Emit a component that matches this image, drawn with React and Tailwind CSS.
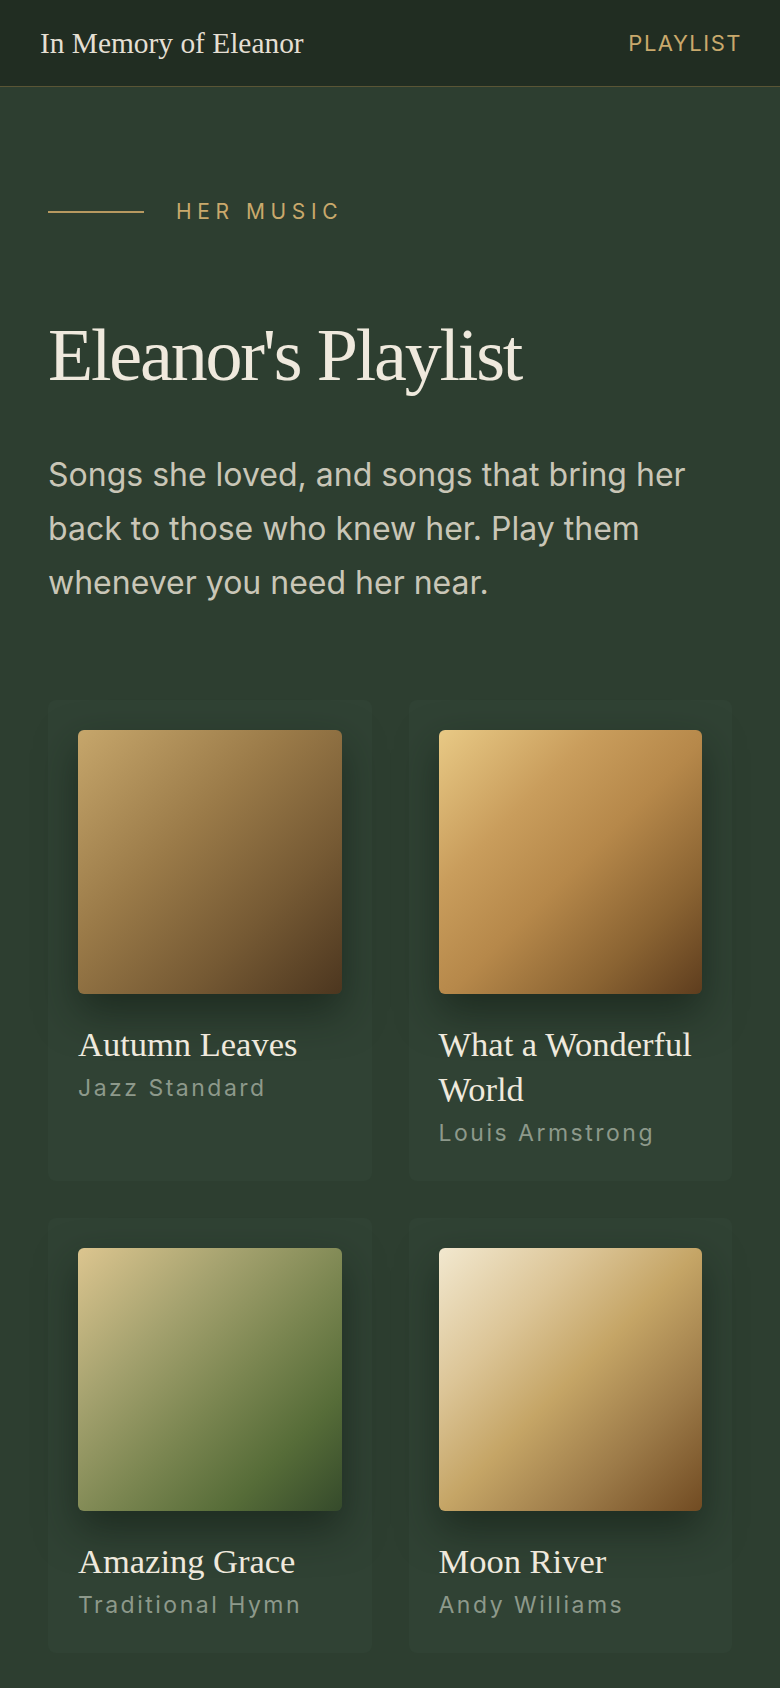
import React from "react";

const serif = { fontFamily: '"Liberation Serif", "Times New Roman", serif' };

const songs = [
  {
    title: "Autumn Leaves",
    artist: "Jazz Standard",
    cover: "bg-[linear-gradient(135deg,#c6a66b_0%,#9a7a48_40%,#765a34_70%,#4c361f_100%)]",
  },
  {
    title: "What a Wonderful World",
    artist: "Louis Armstrong",
    cover: "bg-[linear-gradient(135deg,#e8c985_0%,#c99d5c_30%,#b6884a_52%,#8a6332_78%,#5e3d1e_100%)]",
  },
  {
    title: "Amazing Grace",
    artist: "Traditional Hymn",
    cover: "bg-[linear-gradient(135deg,#dcc58f_0%,#a5a26f_30%,#7b8651_55%,#566c38_78%,#354a2b_100%)]",
  },
  {
    title: "Moon River",
    artist: "Andy Williams",
    cover: "bg-[linear-gradient(135deg,#f2e8cf_0%,#dcc597_28%,#c5a566_50%,#9c7a48_75%,#714b22_100%)]",
  },
];

function SongCard({ song }) {
  return (
    <div className="rounded-[8px] bg-[#304234] p-[30px] pb-[32px]">
      <div
        className={`aspect-square w-full rounded-[6px] shadow-[0_18px_40px_rgba(15,25,17,0.55)] ${song.cover}`}
      />
      <h3
        className="mt-[28px] text-[34.5px] leading-[45px] text-[#efe9dd]"
        style={serif}
      >
        {song.title}
      </h3>
      <p className="mt-[5px] text-[23px] leading-[32px] tracking-[2.5px] text-[#8d998b]">
        {song.artist}
      </p>
    </div>
  );
}

export default function App() {
  return (
    <div
      className="min-h-[1688px] bg-[#2d3e30]"
      style={{ fontFamily: 'Inter, "Noto Sans", sans-serif' }}
    >
      {/* Header */}
      <header className="flex h-[87px] items-center justify-between border-b border-[#5a5535] bg-[#212d22] pl-10 pr-[38px]">
        <span className="text-[29.4px] leading-[36px] text-[#e4dfd3]" style={serif}>
          In Memory of Eleanor
        </span>
        <span className="text-[22px] leading-[26px] tracking-[1.5px] text-[#c9a96c]">
          PLAYLIST
        </span>
      </header>

      <main className="px-12 pt-[113px] pb-10">
        {/* Eyebrow */}
        <div className="flex items-center gap-8">
          <div className="h-[2px] w-[96px] bg-[#b79960]" />
          <span className="text-[21px] leading-[24px] tracking-[5.6px] text-[#c9a96c]">
            HER MUSIC
          </span>
        </div>

        <h1
          className="mt-[91px] text-[74px] leading-[81px] tracking-[-2.2px] text-[#efe9dd]"
          style={serif}
        >
          Eleanor's Playlist
        </h1>

        <p className="mt-[52px] text-[32px] leading-[54px] text-[#c9c6b7]">
          Songs she loved, and songs that bring her back to those who knew her.
          Play them whenever you need her near.
        </p>

        <div className="mt-[90px] grid grid-cols-2 gap-x-[37px] gap-y-[37px]">
          {songs.map((s) => (
            <SongCard key={s.title} song={s} />
          ))}
        </div>
      </main>
    </div>
  );
}
